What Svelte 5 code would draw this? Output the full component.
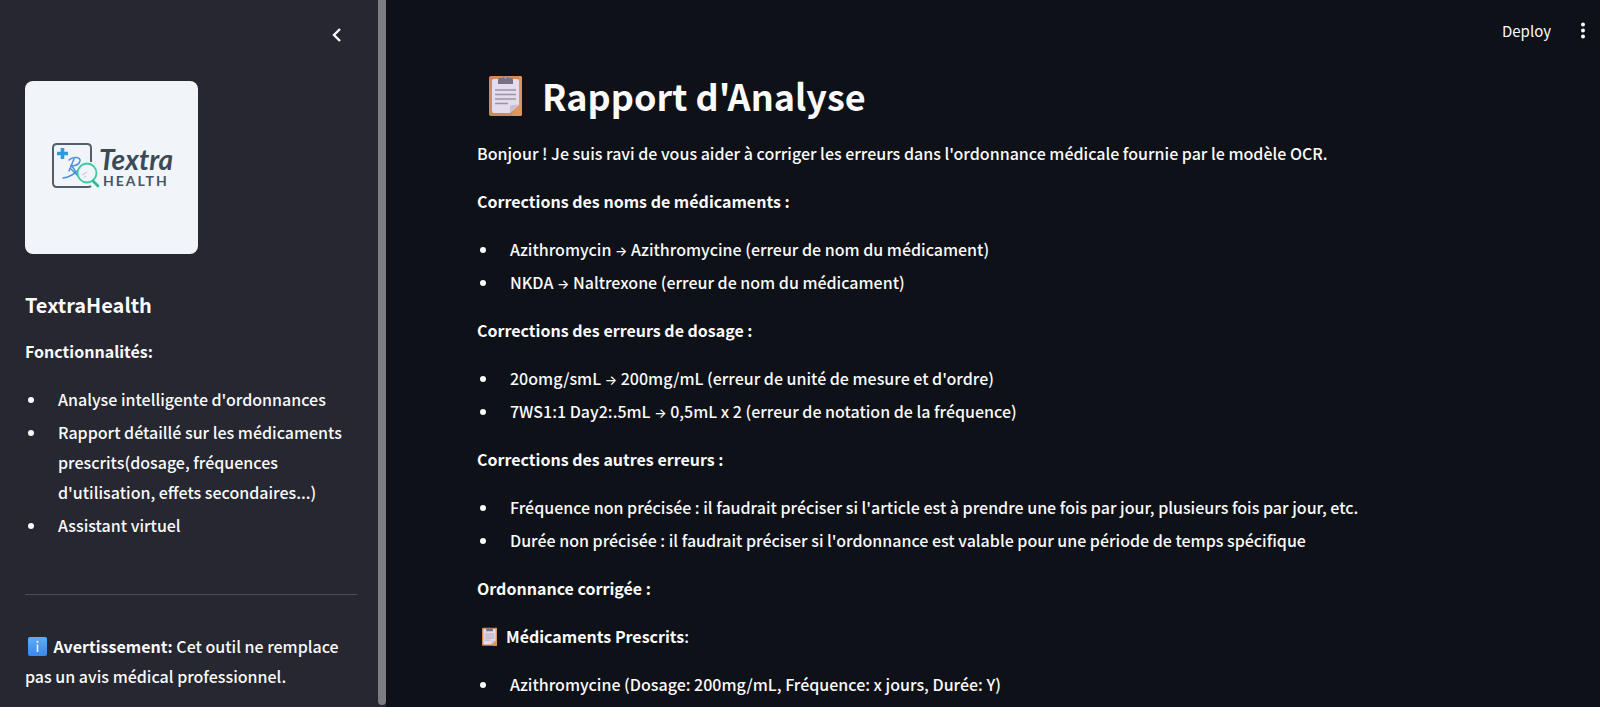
<script>
  const features = [
    "Analyse intelligente d'ordonnances",
    "Rapport détaillé sur les médicaments prescrits(dosage, fréquences d'utilisation, effets secondaires...)",
    'Assistant virtuel'
  ];

  const sections = [
    {
      title: 'Corrections des noms de médicaments :',
      items: [
        ['Azithromycin', 'Azithromycine (erreur de nom du médicament)'],
        ['NKDA', 'Naltrexone (erreur de nom du médicament)']
      ]
    },
    {
      title: 'Corrections des erreurs de dosage :',
      items: [
        ['20omg/smL', "200mg/mL (erreur de unité de mesure et d'ordre)"],
        ['7WS1:1 Day2:.5mL', '0,5mL x 2 (erreur de notation de la fréquence)']
      ]
    },
    {
      title: 'Corrections des autres erreurs :',
      items: [
        ["Fréquence non précisée : il faudrait préciser si l'article est à prendre une fois par jour, plusieurs fois par jour, etc."],
        ["Durée non précisée : il faudrait préciser si l'ordonnance est valable pour une période de temps spécifique"]
      ]
    }
  ];
</script>

{#snippet clipboard()}
  <svg class="clipboard" viewBox="0 0 33 41" aria-hidden="true">
    <rect x="0" y="1" width="33" height="40" rx="2" fill="#d08a5c" />
    <path d="M30 1h1a2 2 0 0 1 2 2v36a2 2 0 0 1-2 2h-8z" fill="#dc975f" />
    <path d="M5 4h23a2 2 0 0 1 2 2v24l-9 8H5a2 2 0 0 1-2-2V6a2 2 0 0 1 2-2z" fill="#e4dcec" />
    <path d="M30 29.500l-9 8.500v-6a2 2 0 0 1 2-2z" fill="#c9bfd2" />
    <path d="M9 9V5a2 2 0 0 1 2-2h2a4 3 0 0 1 7 0h2a2 2 0 0 1 2 2v4z" fill="#79717f" />
    <circle cx="16.500" cy="2.500" r="1.200" fill="#a79faf" />
    <path d="M6 15h21M6 19.500h21M6 24h21M6 28.500h13" stroke="#9c92ab" stroke-width="1.500" />
  </svg>
{/snippet}

<div class="app">
  <aside class="sidebar">
    <div class="sidebar-content">
      <div class="collapse-row">
        <button class="icon-button" aria-label="Réduire">
          <svg width="24" height="24" viewBox="0 0 24 24" fill="none" stroke="#fafafa" stroke-width="2.400"><path d="M15 6l-6 6 6 6" /></svg>
        </button>
      </div>

      <svg class="logo" viewBox="0 0 173 173" role="img" aria-label="Textra Health">
        <rect width="173" height="173" fill="#f1f5f9" />
        <path d="M66 81V67q0-4-4-4H32q-4 0-4 4v35q0 4 4 4h31q2 0 3-1" fill="none" stroke="#53606c" stroke-width="2" />
        <path d="M37.500 67v11M32 72.500h11" stroke="#2f9bdb" stroke-width="3.600" />
        <path d="M44 79c4-4 12-3 11 1-1 4-6 5-10 5 4 0 5 5 7 9M49 78l-5 12M38 97c8-1 12-5 18-10M46 88l8 8" fill="none" stroke="#4d8fdc" stroke-width="1.500" stroke-linecap="round" />
        <circle cx="62" cy="92" r="9.500" fill="#f1f5f9" fill-opacity=".85" stroke="#3cc9a4" stroke-width="1.800" />
        <path d="M57 94l5-3M59 96l2-1" stroke="#b5c4da" stroke-width="1" />
        <path d="M68 100l5 5" stroke="#25bd91" stroke-width="2.600" stroke-linecap="round" />
        <text class="logo-script" x="74" y="89">Textra</text>
        <text class="logo-caps" x="78" y="105">HEALTH</text>
      </svg>

      <h3>TextraHealth</h3>
      <p><strong>Fonctionnalités:</strong></p>
      <ul>
        {#each features as feature}
          <li>{feature}</li>
        {/each}
      </ul>
      <hr />
      <p>
        <svg class="info" viewBox="0 0 19 19" aria-hidden="true">
          <defs><linearGradient id="info-fill" x2="0" y2="1"><stop stop-color="#5bb0f5" /><stop offset="1" stop-color="#3b86e8" /></linearGradient></defs>
          <rect width="19" height="19" rx="2" fill="url(#info-fill)" />
          <path d="M9.500 7.500V15" stroke="#e8f4ff" stroke-width="1.600" />
          <circle cx="9.500" cy="4.800" r="1.100" fill="#e8f4ff" />
        </svg>
        <strong>Avertissement:</strong> Cet outil ne remplace pas un avis médical professionnel.
      </p>
    </div>
    <div class="scroll-thumb"></div>
  </aside>

  <div class="page">
    <header>
      <button class="deploy">Deploy</button>
      <button class="icon-button menu" aria-label="Menu">
        <svg width="18" height="18" viewBox="0 0 18 18" fill="#fafafa"><circle cx="9" cy="3.500" r="2" /><circle cx="9" cy="9.500" r="2" /><circle cx="9" cy="15.500" r="2" /></svg>
      </button>
    </header>
    <main>
      <h1>{@render clipboard()}Rapport d'Analyse</h1>
      <p>Bonjour ! Je suis ravi de vous aider à corriger les erreurs dans l'ordonnance médicale fournie par le modèle OCR.</p>
      {#each sections as section}
        <p><strong>{section.title}</strong></p>
        <ul>
          {#each section.items as [before, after]}
            <li>{before}{#if after}{' '}<span class="arrow">→</span>{' '}{after}{/if}</li>
          {/each}
        </ul>
      {/each}
      <p><strong>Ordonnance corrigée :</strong></p>
      <p class="prescribed">{@render clipboard()}<strong>Médicaments Prescrits</strong>:</p>
      <ul>
        <li>Azithromycine (Dosage: 200mg/mL, Fréquence: x jours, Durée: Y)</li>
      </ul>
    </main>
  </div>
</div>

<style>
  :global(body) {
    margin: 0;
    background: #0e1117;
  }
  .app {
    display: flex;
    height: 100vh;
    overflow: hidden;
    color: #fafafa;
    font-family: 'Noto Sans CJK SC', 'Noto Sans', sans-serif;
    font-size: 16px;
    font-weight: 500;
    line-height: 29px;
  }
  strong {
    font-weight: 700;
  }
  .sidebar {
    flex: 0 0 386px;
    display: flex;
    background: #262730;
    line-height: 30px;
  }
  .sidebar-content {
    flex: 1;
    min-width: 0;
    padding: 0 21px 0 25px;
  }
  .scroll-thumb {
    width: 8px;
    margin-bottom: 2px;
    border-radius: 0 0 4px 4px;
    background: #7d7c82;
  }
  .collapse-row {
    display: flex;
    justify-content: flex-end;
    height: 58px;
    padding: 23px 8px 0 0;
  }
  button {
    border: 0;
    padding: 0;
    background: none;
    color: inherit;
    font: inherit;
    cursor: pointer;
  }
  .icon-button {
    display: flex;
    align-items: center;
    justify-content: center;
    width: 24px;
    height: 24px;
  }
  .logo {
    display: block;
    width: 173px;
    border-radius: 8px;
  }
  .logo-script {
    font: italic 700 28px Lato, sans-serif;
    fill: #3a4a57;
  }
  .logo-caps {
    font: 700 14px Lato, sans-serif;
    letter-spacing: 2px;
    fill: #465663;
  }
  h1,
  h3,
  p,
  ul {
    margin: 0;
  }
  h3 {
    padding: 36px 0 16px;
    font-size: 20px;
  }
  p,
  ul {
    padding: 0 0 19px;
  }
  .sidebar p,
  .sidebar ul {
    padding-bottom: 18px;
  }
  li {
    margin: 0 0 4px 22px;
    padding-left: 11px;
  }
  .sidebar li {
    margin-bottom: 3px;
  }
  li:last-child,
  .sidebar li:last-child {
    margin-bottom: 0;
  }
  hr {
    margin: 36px 0;
    border: 0;
    border-top: 1px solid #4b4c54;
  }
  .info {
    width: 19px;
    height: 19px;
    margin: 0 3px;
    vertical-align: -3px;
  }
  .page {
    flex: 1;
    min-width: 0;
    display: flex;
    flex-direction: column;
  }
  header {
    display: flex;
    justify-content: flex-end;
    align-items: center;
    gap: 20px;
    height: 60px;
    padding-right: 5px;
  }
  .deploy {
    font-size: 15px;
    font-weight: 400;
  }
  main {
    flex: 1;
    min-height: 0;
    overflow: hidden;
    padding: 6px 91px 0;
  }
  h1 {
    display: flex;
    align-items: center;
    gap: 20px;
    padding: 0 0 15px 12px;
    font-size: 36px;
    line-height: 58px;
  }
  .clipboard {
    width: 33px;
    height: 41px;
  }
  .prescribed {
    display: flex;
    align-items: center;
  }
  .prescribed .clipboard {
    width: 15px;
    height: 19px;
    margin: 0 9px 0 5px;
  }
  .arrow {
    font-family: Inter, sans-serif;
    font-size: 13px;
    line-height: 1;
  }
</style>
